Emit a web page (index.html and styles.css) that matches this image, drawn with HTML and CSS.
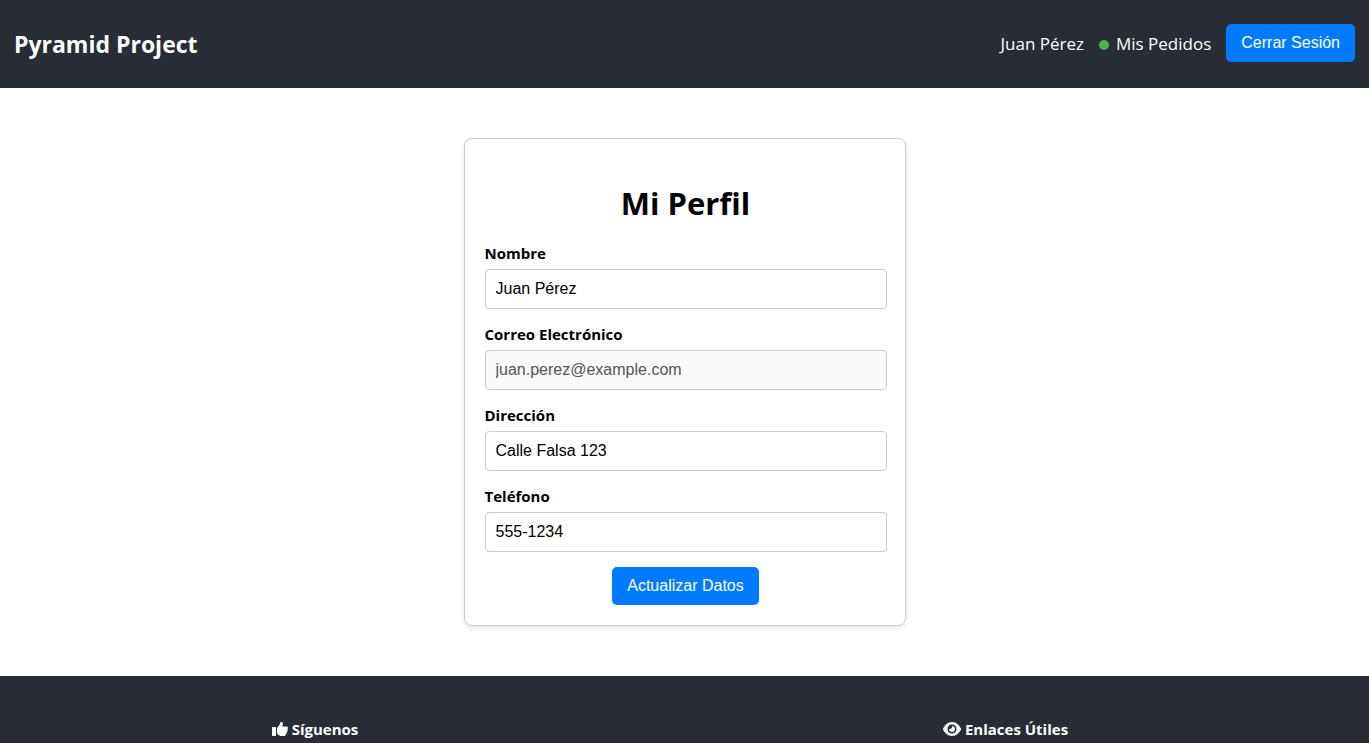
FILE: index.html
```html
<!DOCTYPE html>
<html lang="es">
<head>
<meta charset="utf-8">
<meta name="viewport" content="width=device-width, initial-scale=1">
<title>Mi Perfil - Pyramid Project</title>
<link rel="stylesheet" href="styles.css">
</head>
<body>
<header class="navbar">
  <a class="brand" href="#">Pyramid Project</a>
  <nav class="nav-links">
    <a class="nav-link" href="#">Juan Pérez</a>
    <a class="nav-link orders" href="#"><span class="status-dot"></span>Mis Pedidos</a>
    <button class="btn" type="button">Cerrar Sesión</button>
  </nav>
</header>
<main class="page">
  <form class="card">
    <h1 class="title">Mi Perfil</h1>
    <div class="field">
      <label for="nombre">Nombre</label>
      <input id="nombre" type="text" value="Juan Pérez">
    </div>
    <div class="field">
      <label for="correo">Correo Electrónico</label>
      <input id="correo" type="email" value="juan.perez@example.com" disabled>
    </div>
    <div class="field">
      <label for="direccion">Dirección</label>
      <input id="direccion" type="text" value="Calle Falsa 123">
    </div>
    <div class="field">
      <label for="telefono">Teléfono</label>
      <input id="telefono" type="text" value="555-1234">
    </div>
    <button class="btn submit" type="button">Actualizar Datos</button>
  </form>
</main>
<footer class="footer">
  <h2 class="footer-title">
    <svg width="16" height="16" viewBox="0 0 512 512" aria-hidden="true"><path fill="currentColor" d="M313.400 32.900c26 5.200 42.900 30.500 37.700 56.500l-2.300 11.400c-5.300 26.700-15.100 52.100-28.800 75.200H464c26.500 0 48 21.500 48 48 0 18.500-10.500 34.600-25.900 42.600C497 275.400 504 288.900 504 304c0 23.400-16.800 42.900-38.900 47.100 4.400 7.300 6.900 15.800 6.900 24.900 0 21.300-13.900 39.400-33.100 45.600.7 3.300 1.100 6.800 1.100 10.400 0 26.500-21.500 48-48 48h-97.500c-19 0-37.500-5.600-53.300-16.100l-38.500-25.700C176 420.400 160 390.400 160 358.300V247.100c0-29.200 13.300-56.700 36-75l7.400-5.900c26.500-21.200 44.600-51 51.200-84.200l2.300-11.400c5.200-26 30.500-42.900 56.500-37.700zM32 192h64c17.700 0 32 14.300 32 32v224c0 17.700-14.300 32-32 32H32c-17.700 0-32-14.300-32-32V224c0-17.700 14.300-32 32-32z"/></svg>
    <span>Síguenos</span>
  </h2>
  <h2 class="footer-title">
    <svg width="18" height="16" viewBox="0 0 576 512" aria-hidden="true"><path fill="currentColor" d="M288 32c-80.800 0-145.500 36.800-192.600 80.600C48.600 156 17.300 208 2.500 243.700c-3.300 7.900-3.300 16.700 0 24.600C17.300 304 48.600 356 95.400 399.400 142.500 443.200 207.200 480 288 480s145.500-36.800 192.600-80.600c46.800-43.500 78.100-95.400 93-131.100 3.300-7.900 3.300-16.700 0-24.600-14.900-35.700-46.200-87.700-93-131.100C433.500 68.800 368.800 32 288 32zM144 256a144 144 0 1 1 288 0 144 144 0 1 1-288 0zm144-64c0 35.300-28.700 64-64 64-7.100 0-13.900-1.200-20.300-3.300-5.500-1.800-11.900 1.600-11.700 7.400.3 6.900 1.300 13.800 3.200 20.700 13.700 51.200 66.400 81.600 117.600 67.900s81.600-66.400 67.900-117.600c-11.100-41.500-47.800-69.400-88.600-71.100-5.800-.2-9.200 6.100-7.400 11.700 2.100 6.400 3.300 13.200 3.300 20.300z"/></svg>
    <span>Enlaces Útiles</span>
  </h2>
</footer>
</body>
</html>
```
FILE: styles.css
```css
* { box-sizing: border-box; }

body {
  margin: 0;
  min-height: 100vh;
  display: flex;
  flex-direction: column;
  background: #fff;
  color: #000;
  font-family: "Segoe UI", "Open Sans", "Noto Sans", sans-serif;
  font-size: 16px;
}

a { color: inherit; text-decoration: none; }

.navbar {
  display: flex;
  align-items: center;
  justify-content: space-between;
  padding: 24px 14px 26px;
  background: #282c34;
  color: #fff;
}

.brand { padding-top: 2px; font-size: 23px; line-height: 32px; font-weight: 700; }

.nav-links { display: flex; align-items: center; gap: 15px; }

.nav-link { font-size: 17px; line-height: 24px; padding-top: 2px; }

.orders { display: flex; align-items: center; gap: 7px; }

.status-dot {
  width: 10px;
  height: 10px;
  margin-top: 2px;
  border-radius: 50%;
  background: #4caf50;
}

.btn {
  height: 38px;
  padding: 0 15px;
  border: 0;
  border-radius: 5px;
  background: #007bff;
  color: #fff;
  font: 16px "Liberation Sans", Arial, sans-serif;
  cursor: pointer;
}

.page { display: flex; justify-content: center; padding: 50px 20px; }

.card {
  display: flex;
  flex-direction: column;
  width: 100%;
  max-width: 442px;
  padding: 42px 18px 20px 20px;
  border: 1px solid #ccc;
  border-radius: 8px;
  box-shadow: 0 2px 5px rgba(0, 0, 0, 0.1);
}

.title {
  margin: 0 0 18px;
  font-size: 31px;
  line-height: 44px;
  text-align: center;
}

.field { margin-bottom: 15px; }

.field label {
  display: block;
  margin-bottom: 5px;
  font-size: 15px;
  line-height: 21px;
  font-weight: 700;
}

.field input {
  display: block;
  width: 100%;
  height: 40px;
  padding: 0 10px;
  border: 1px solid #ccc;
  border-radius: 4px;
  background: #fff;
  color: #000;
  font: 16px "Liberation Sans", Arial, sans-serif;
}

.field input:disabled { background: #fafafa; color: #545454; }

.submit { align-self: center; }

.footer {
  flex: 1;
  display: grid;
  grid-template-columns: 13fr 15fr;
  column-gap: 12px;
  padding-top: 42px;
  background: #282c34;
  color: #fff;
}

.footer-title {
  display: flex;
  align-items: center;
  justify-content: center;
  gap: 4px;
  height: 22px;
  margin: 0;
  font-size: 15px;
  line-height: 22px;
}
```
